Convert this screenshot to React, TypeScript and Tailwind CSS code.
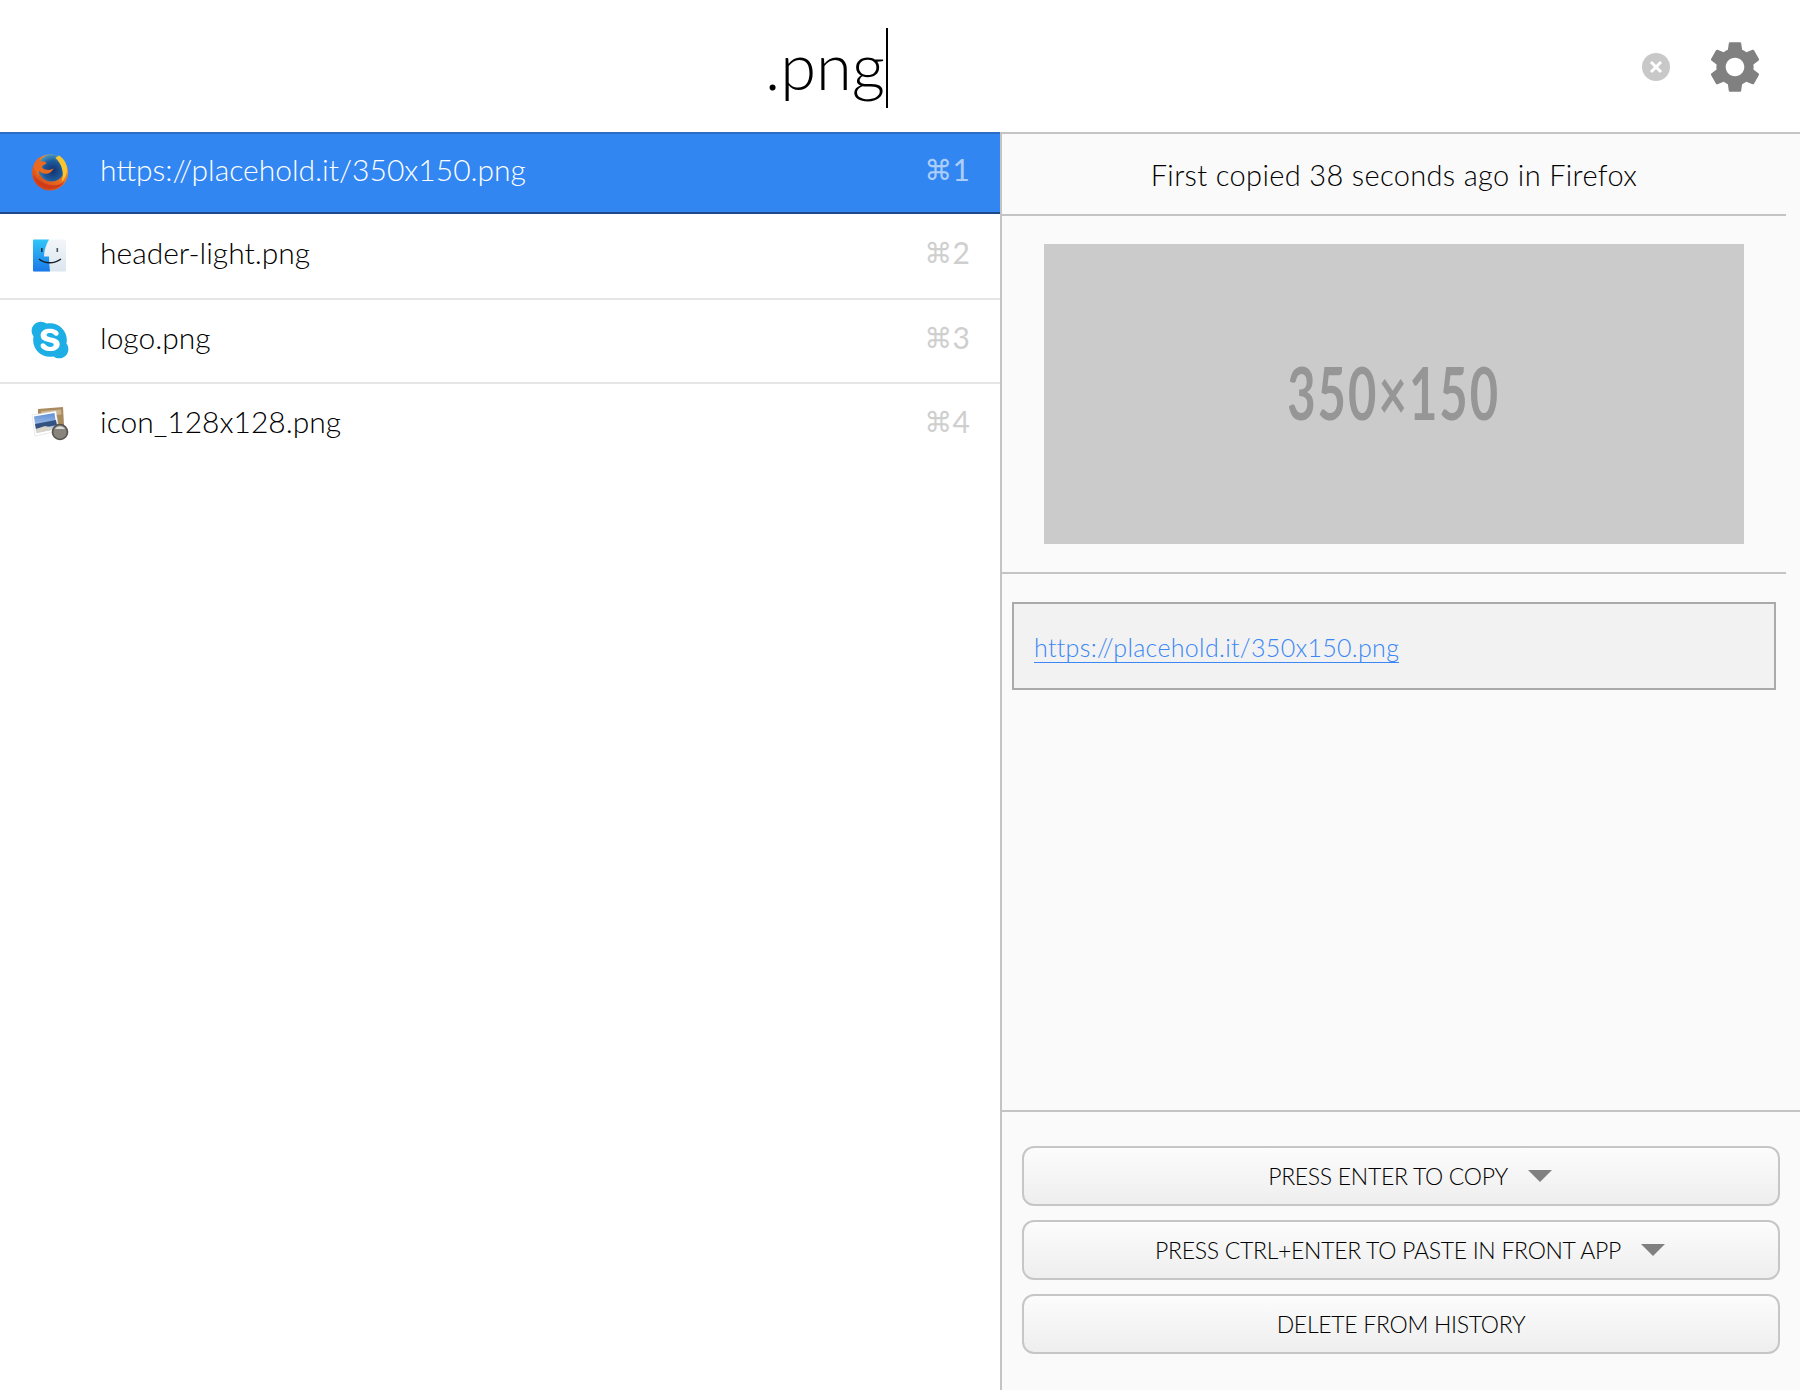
import React from 'react';
import { MdSettings } from 'react-icons/md';
import { FaSkype } from 'react-icons/fa';

function FirefoxIcon() {
  return (
    <svg width="38" height="38" viewBox="0 0 38 38" className="blur-[0.4px]">
      <defs>
        <radialGradient id="ffGlobe" cx="0.55" cy="0.6" r="0.65">
          <stop offset="0" stopColor="#14306e" />
          <stop offset="0.55" stopColor="#1d5a9c" />
          <stop offset="1" stopColor="#4fa3c9" />
        </radialGradient>
        <linearGradient id="ffBody" x1="1" y1="0" x2="0.2" y2="1">
          <stop offset="0" stopColor="#fbd23c" />
          <stop offset="0.4" stopColor="#ef7f22" />
          <stop offset="1" stopColor="#d4401b" />
        </linearGradient>
      </defs>
      <circle cx="19" cy="19.5" r="18" fill="url(#ffBody)" />
      <circle cx="20.5" cy="15" r="13.5" fill="url(#ffGlobe)" />
      <path d="M2.5 13C3.5 9 6 6 9 4c-.3 2 0 3.5 1.5 4.8 2-.6 4-.1 5 1.6-1.5 1.2-4 1.600-4.700 3.100.6 1.700 2.500 3 5 3.300 2.500.3 5-.3 7-1.500-1.500 3.500-4.500 5.500-8 5.500-3 0-5-1-6.500-3L7 24z" fill="#ea6a20" />
      <path d="M28 2.500c5 3 8 8.500 8 14 0 5-2 9.500-5.500 12.500 1.500-4 1.800-8.500.5-13-1-4.500-3.500-8-6.500-11 1-1 2.500-2 3.500-2.500z" fill="#f9c630" />
      <path d="M2 22c2 8.500 9 14 17 14 6.500 0 11.500-2.500 14.500-7.500-4.500 3.500-9.500 4.500-14.500 3.500-6.500-1.200-12-4.500-17-10z" fill="#d03c1a" />
    </svg>
  );
}

function FinderIcon() {
  return (
    <svg width="36" height="34" viewBox="0 0 36 34" className="blur-[0.3px]">
      <defs>
        <linearGradient id="fdLeft" x1="0" y1="0" x2="0" y2="1">
          <stop offset="0" stopColor="#30c6f8" />
          <stop offset="1" stopColor="#1a78e8" />
        </linearGradient>
        <linearGradient id="fdRight" x1="0" y1="0" x2="0" y2="1">
          <stop offset="0" stopColor="#f3f6f8" />
          <stop offset="1" stopColor="#dbe6ef" />
        </linearGradient>
      </defs>
      <rect x="1" y="0.5" width="33" height="32" rx="1" fill="url(#fdRight)" />
      <path d="M2 0.5h15c-3 5-5 11-5 17h5c0 5 .5 10 1 15H2a1 1 0 0 1-1-1V1.500a1 1 0 0 1 1-1z" fill="url(#fdLeft)" />
      <rect x="9" y="9" width="1.600" height="4" fill="#1c2a3a" />
      <rect x="24.500" y="9" width="1.600" height="4" fill="#4a5560" />
      <path d="M7 20c6 5 15 5 22 0" fill="none" stroke="#14202c" strokeWidth="1.400" />
    </svg>
  );
}

function PreviewIcon() {
  return (
    <svg width="38" height="36" viewBox="0 0 38 36" className="blur-[0.4px]">
      <defs>
        <linearGradient id="pvSky" x1="0" y1="0" x2="0" y2="1">
          <stop offset="0" stopColor="#5f8fd6" />
          <stop offset="1" stopColor="#c5d8f0" />
        </linearGradient>
      </defs>
      <path d="M7 3l25-2 1 18-26 2z" fill="#a98a5f" />
      <path d="M10 5l20-1.500 .5 5-20 1.500z" fill="#c9b48e" />
      <path d="M1 9l24-4 3 20-24 5z" fill="#ffffff" stroke="#d5d5d5" strokeWidth="0.500" />
      <path d="M3 10.500l20.500-3.500 2.300 16-20.500 4z" fill="url(#pvSky)" />
      <path d="M4 18l21-4 1 5-21 4z" fill="#33527f" />
      <path d="M5 23l9-3 8 2 3 1-19 4z" fill="#d8d4c8" />
      <circle cx="29" cy="26" r="7.500" fill="#8a857c" stroke="#55524e" strokeWidth="1.600" />
      <path d="M24 23a6 6 0 0 1 10 0z" fill="#dcdcdc" />
    </svg>
  );
}

interface HistoryItem {
  name: string;
  keyNum: number;
  icon: React.ReactNode;
}

const items: HistoryItem[] = [
  { name: 'https://placehold.it/350x150.png', keyNum: 1, icon: <FirefoxIcon /> },
  { name: 'header-light.png', keyNum: 2, icon: <FinderIcon /> },
  { name: 'logo.png', keyNum: 3, icon: <FaSkype size={42} className="text-[#1eaee6]" /> },
  { name: 'icon_128x128.png', keyNum: 4, icon: <PreviewIcon /> },
];

function ActionButton({ label, caret }: { label: string; caret?: boolean }) {
  return (
    <button className={`flex h-[60px] w-full items-center justify-center rounded-[12px] border-2 border-[#c6c6c6] bg-gradient-to-b from-[#fcfcfc] to-[#eeeeee] text-[23px] font-light tracking-[-0.3px] text-black ${caret ? 'pl-[18px]' : ''}`}>
      <span>{label}</span>
      {caret && <span className="ml-[20px] h-0 w-0 border-x-[12px] border-t-[12px] border-x-transparent border-t-[#808080]" />}
    </button>
  );
}

export default function App() {
  return (
    <div className="flex h-[1390px] w-[1800px] flex-col overflow-hidden bg-white font-['Lato',sans-serif] text-black">
      <header className="flex h-[132px] shrink-0 items-center pl-[765px] pr-[34px]">
        <span className="text-[65px] leading-none font-light pb-[2px]">.png</span>
        <span className="mt-[4px] ml-[1px] h-[80px] w-[2px] bg-black" />
        <div className="ml-auto flex items-center gap-[34px] pt-[1px]">
          <span className="flex h-[28px] w-[28px] items-center justify-center rounded-full bg-[#c8c8c8]">
            <svg width="16" height="16" viewBox="0 0 16 16">
              <path d="M3 3l10 10M13 3L3 13" stroke="#fff" strokeWidth="3" />
            </svg>
          </span>
          <MdSettings size={62} className="text-[#808080]" />
        </div>
      </header>

      <div className="flex min-h-0 flex-1">
        <ul className="w-[1000px] shrink-0">
          {items.map((item, i) => (
            <li
              key={item.name}
              className={
                i === 0
                  ? 'flex h-[82px] items-center border-t-2 border-b-2 border-t-[#2b6cc4] border-b-[#1f4a87] bg-[#3286f2] text-white'
                  : i === 3
                    ? 'flex h-[82px] items-center'
                    : 'flex items-center border-b-2 border-[#e6e6e6] ' + (i === 1 ? 'h-[86px]' : 'h-[84px]')
              }
            >
              <span className={`flex w-[100px] shrink-0 justify-center ${i === 1 ? '' : 'pb-[3px]'}`}>{item.icon}</span>
              <span className="pb-[8px] text-[30px] leading-none font-light">{item.name}</span>
              <span className={`ml-auto flex items-center pr-[30px] pb-[4px] leading-none ${i === 0 ? 'text-white/60' : 'text-[#cfcfcf]'}`}>
                <span className="font-['DejaVu_Sans',sans-serif] text-[28px]">⌘</span>
                <span className="pb-[4px] text-[30px]">{item.keyNum}</span>
              </span>
            </li>
          ))}
        </ul>

        <div className="flex min-w-0 flex-1 flex-col border-t-2 border-l-2 border-[#c4c4c4] bg-[#fafafa]">
          <div className="flex-1 pr-[14px]">
            <div className="flex h-[82px] items-center justify-center border-b-2 border-[#c4c4c4] pt-[2px] text-[29px] font-light tracking-[0.35px]">
              First copied 38 seconds ago in Firefox
            </div>
            <div className="border-b-2 border-[#c4c4c4] px-[42px] py-[28px]">
              <div className="flex h-[300px] items-center justify-center bg-[#cbcbcb] pb-[4px]">
                <span className="scale-x-[0.68] text-[72px] leading-none font-bold tracking-[3px] whitespace-nowrap text-[#969696]">350×150</span>
              </div>
            </div>
            <div className="px-[10px] pt-[28px]">
              <div className="flex h-[88px] items-center border-2 border-[#aaaaaa] bg-[#f2f2f2] pr-[21px] pl-[20px] pt-[3px]">
                <a className="border-b border-[#3b87f5] text-[25px] leading-[30px] font-light tracking-[0.3px] text-[#3b87f5]">https://placehold.it/350x150.png</a>
              </div>
            </div>
          </div>
          <div className="flex h-[280px] shrink-0 flex-col gap-[14px] border-t-2 border-[#c4c4c4] pt-[34px] pr-[20px] pl-[20px]">
            <ActionButton label="PRESS ENTER TO COPY" caret />
            <ActionButton label="PRESS CTRL+ENTER TO PASTE IN FRONT APP" caret />
            <ActionButton label="DELETE FROM HISTORY" />
          </div>
        </div>
      </div>
    </div>
  );
}
